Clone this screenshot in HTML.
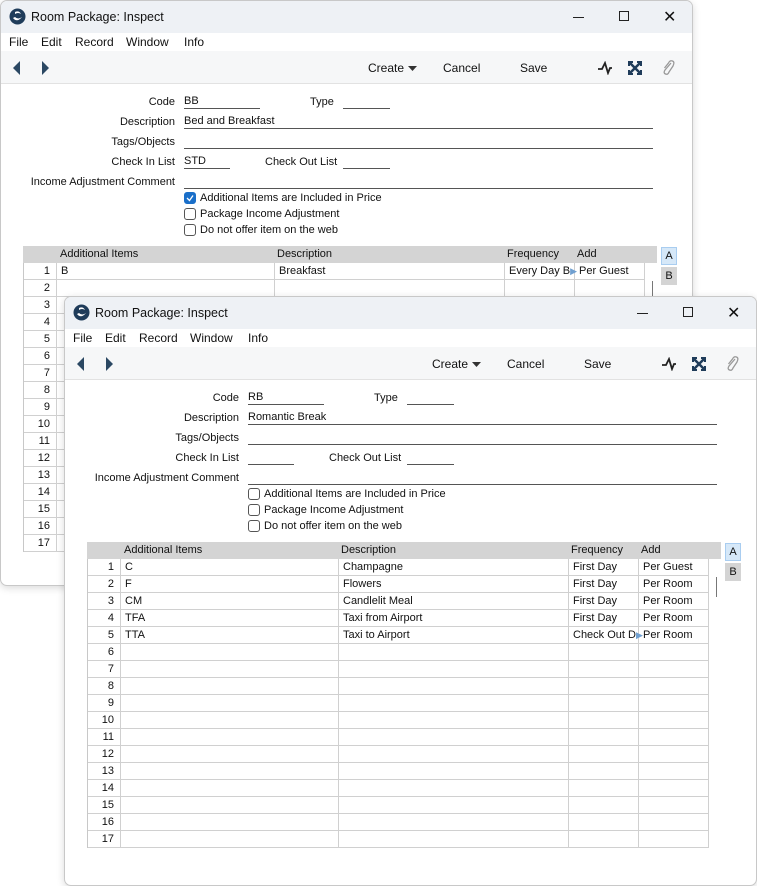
<!DOCTYPE html>
<html><head><meta charset="utf-8"><style>
*{box-sizing:border-box;margin:0;padding:0}
body{width:757px;height:882px;background:#fff;position:relative;overflow:hidden;font-family:"Liberation Sans",sans-serif;font-size:11px;color:#111}
.win{position:absolute;width:693px;background:#fff;border:1px solid #c8c8c8;border-radius:7px;overflow:hidden;box-shadow:0 2px 8px rgba(0,0,0,.15)}
.a{position:absolute;white-space:nowrap}
.title{left:0;top:0;width:100%;height:32px;background:#eef1f5}
.menu{left:0;top:32px;width:100%;height:18px;background:#fff;font-size:12px}
.tb{left:0;top:50px;width:100%;height:33px;background:#f6f7f8;border-bottom:1px solid #e2e2e2;font-size:12px}
.lbl{text-align:right;width:170px;left:4px}
.ln{border-bottom:1px solid #555;height:14px}
.cb{width:12px;height:12px;border:1px solid #555;border-radius:3px;background:#fff}
.grid{left:22px;top:245px;width:637px}
.hd{position:absolute;left:0;top:0;width:634px;height:17px;background:#d4d4d4}
.body{position:absolute;left:0;top:17px;width:621px;border-left:1px solid #c8c8c8;background:repeating-linear-gradient(to bottom,transparent 0,transparent 16px,#d0d0d0 16px,#d0d0d0 17px)}
.vl{position:absolute;top:0;width:1px;background:#d0d0d0}
.rows{position:absolute;top:0;line-height:17px}
</style></head><body>

<!-- Window 1 -->
<div class="win" style="left:0;top:0;height:586px">
 <div class="a title">
  <svg class="a" style="left:8px;top:7px" width="17" height="17" viewBox="0 0 17 17"><circle cx="8.5" cy="8.5" r="8" fill="#1f3c5a"/><path d="M4 10 Q8 15 13 9 Q9 12 6 9 Z" fill="#fff"/><path d="M6 4 Q10 2 12 6 Q9 4 6 6Z" fill="#fff"/></svg>
  <div class="a" style="left:30px;top:9px;font-size:12.5px">Room Package: Inspect</div>
  <div class="a" style="left:572px;top:16px;width:11px;height:1px;background:#222"></div>
  <div class="a" style="left:618px;top:10px;width:10px;height:10px;border:1px solid #222"></div>
  <div class="a" style="left:662px;top:6px;font-size:16px">✕</div>
 </div>
 <div class="a menu"><span class="a" style="left:8px;top:2px">File</span><span class="a" style="left:40px;top:2px">Edit</span><span class="a" style="left:74px;top:2px">Record</span><span class="a" style="left:125px;top:2px">Window</span><span class="a" style="left:183px;top:2px">Info</span></div>
 <div class="a tb">
  <svg class="a" style="left:11px;top:10px" width="40" height="14"><path d="M8 0 L1 7 L8 14Z" fill="#2b4863"/><path d="M30 0 L37 7 L30 14Z" fill="#2b4863"/></svg>
  <span class="a" style="left:367px;top:10px">Create</span><svg class="a" style="left:407px;top:15px" width="9" height="5"><path d="M0 0H9L4.5 5Z" fill="#333"/></svg>
  <span class="a" style="left:442px;top:10px">Cancel</span><span class="a" style="left:519px;top:10px">Save</span>
  <svg class="a" style="left:596px;top:10px" width="16" height="14"><path d="M1 8 L5 8 L8 2 L11 12 L13 7 L15 7" stroke="#222" stroke-width="1.8" fill="none"/></svg>
  <svg class="a" style="left:627px;top:10px" width="14" height="14"><path d="M1 1L13 13M13 1L1 13" stroke="#1f3c5a" stroke-width="2.5"/><path d="M0 0h5v2H2v3H0zM14 0v5h-2V2H9V0zM0 14V9h2v3h3v2zM14 14H9v-2h3V9h2z" fill="#1f3c5a"/></svg>
  <svg class="a" style="left:660px;top:8px" width="14" height="17"><path d="M10 4 L4 11 Q2 14 4.5 15 Q7 16 8 13 L12 7 Q14 3 11.5 2 Q9 1 7.5 4 L3.5 9" stroke="#999" stroke-width="1.3" fill="none"/></svg>
 </div>
 <div class="a lbl" style="top:95px">Code</div><div class="a ln" style="left:183px;top:94px;width:76px">BB</div>
 <div class="a" style="left:309px;top:95px">Type</div><div class="a ln" style="left:342px;top:94px;width:47px"></div>
 <div class="a lbl" style="top:115px">Description</div><div class="a ln" style="left:183px;top:114px;width:469px">Bed and Breakfast</div>
 <div class="a lbl" style="top:135px">Tags/Objects</div><div class="a ln" style="left:183px;top:134px;width:469px"></div>
 <div class="a lbl" style="top:155px">Check In List</div><div class="a ln" style="left:183px;top:154px;width:46px">STD</div>
 <div class="a" style="left:264px;top:155px">Check Out List</div><div class="a ln" style="left:342px;top:154px;width:47px"></div>
 <div class="a lbl" style="top:175px">Income Adjustment Comment</div><div class="a ln" style="left:183px;top:174px;width:469px"></div>
 <div class="a cb" style="left:183px;top:191px;background:#1a6fc9;border-color:#1a6fc9"><svg width="10" height="10" style="position:absolute;left:0;top:0"><path d="M2 5L4.5 7.5L8 2.5" stroke="#fff" stroke-width="1.3" fill="none"/></svg></div><div class="a" style="left:199px;top:191px">Additional Items are Included in Price</div>
 <div class="a cb" style="left:183px;top:207px"></div><div class="a" style="left:199px;top:207px">Package Income Adjustment</div>
 <div class="a cb" style="left:183px;top:223px"></div><div class="a" style="left:199px;top:223px">Do not offer item on the web</div>
 <div class="a grid">
  <div class="hd"><span class="a" style="left:37px;top:2px">Additional Items</span><span class="a" style="left:254px;top:2px">Description</span><span class="a" style="left:484px;top:2px">Frequency</span><span class="a" style="left:554px;top:2px">Add</span></div>
  <div class="body" style="height:289px">
   <div class="vl" style="left:32px;height:289px"></div><div class="vl" style="left:250px;height:289px"></div><div class="vl" style="left:480px;height:289px"></div><div class="vl" style="left:550px;height:289px"></div><div class="vl" style="left:620px;height:289px"></div>
   <div class="rows" style="left:0;width:26px;text-align:right">1<br>2<br>3<br>4<br>5<br>6<br>7<br>8<br>9<br>10<br>11<br>12<br>13<br>14<br>15<br>16<br>17</div>
   <div class="rows" style="left:37px">B</div><div class="rows" style="left:255px">Breakfast</div><div class="rows" style="left:485px">Every Day B<span style="color:#6f9fd0;font-size:9px">▶</span></div><div class="rows" style="left:555px">Per Guest</div>
  </div>
  <div class="a" style="left:629px;top:35px;width:1px;height:20px;background:#777"></div>
 </div>
 <div class="a" style="left:660px;top:246px;width:16px;height:18px;background:#d6e8f8;border:1px solid #a9cdf0;text-align:center;line-height:16px">A</div>
 <div class="a" style="left:660px;top:266px;width:16px;height:18px;background:#d4d4d4;text-align:center;line-height:18px">B</div>
</div>

<!-- Window 2 -->
<div class="win" style="left:64px;top:296px;height:590px">
 <div class="a title">
  <svg class="a" style="left:8px;top:7px" width="17" height="17" viewBox="0 0 17 17"><circle cx="8.5" cy="8.5" r="8" fill="#1f3c5a"/><path d="M4 10 Q8 15 13 9 Q9 12 6 9 Z" fill="#fff"/><path d="M6 4 Q10 2 12 6 Q9 4 6 6Z" fill="#fff"/></svg>
  <div class="a" style="left:30px;top:9px;font-size:12.5px">Room Package: Inspect</div>
  <div class="a" style="left:572px;top:16px;width:11px;height:1px;background:#222"></div>
  <div class="a" style="left:618px;top:10px;width:10px;height:10px;border:1px solid #222"></div>
  <div class="a" style="left:662px;top:6px;font-size:16px">✕</div>
 </div>
 <div class="a menu"><span class="a" style="left:8px;top:2px">File</span><span class="a" style="left:40px;top:2px">Edit</span><span class="a" style="left:74px;top:2px">Record</span><span class="a" style="left:125px;top:2px">Window</span><span class="a" style="left:183px;top:2px">Info</span></div>
 <div class="a tb">
  <svg class="a" style="left:11px;top:10px" width="40" height="14"><path d="M8 0 L1 7 L8 14Z" fill="#2b4863"/><path d="M30 0 L37 7 L30 14Z" fill="#2b4863"/></svg>
  <span class="a" style="left:367px;top:10px">Create</span><svg class="a" style="left:407px;top:15px" width="9" height="5"><path d="M0 0H9L4.5 5Z" fill="#333"/></svg>
  <span class="a" style="left:442px;top:10px">Cancel</span><span class="a" style="left:519px;top:10px">Save</span>
  <svg class="a" style="left:596px;top:10px" width="16" height="14"><path d="M1 8 L5 8 L8 2 L11 12 L13 7 L15 7" stroke="#222" stroke-width="1.8" fill="none"/></svg>
  <svg class="a" style="left:627px;top:10px" width="14" height="14"><path d="M1 1L13 13M13 1L1 13" stroke="#1f3c5a" stroke-width="2.5"/><path d="M0 0h5v2H2v3H0zM14 0v5h-2V2H9V0zM0 14V9h2v3h3v2zM14 14H9v-2h3V9h2z" fill="#1f3c5a"/></svg>
  <svg class="a" style="left:660px;top:8px" width="14" height="17"><path d="M10 4 L4 11 Q2 14 4.5 15 Q7 16 8 13 L12 7 Q14 3 11.5 2 Q9 1 7.5 4 L3.5 9" stroke="#999" stroke-width="1.3" fill="none"/></svg>
 </div>
 <div class="a lbl" style="top:95px">Code</div><div class="a ln" style="left:183px;top:94px;width:76px">RB</div>
 <div class="a" style="left:309px;top:95px">Type</div><div class="a ln" style="left:342px;top:94px;width:47px"></div>
 <div class="a lbl" style="top:115px">Description</div><div class="a ln" style="left:183px;top:114px;width:469px">Romantic Break</div>
 <div class="a lbl" style="top:135px">Tags/Objects</div><div class="a ln" style="left:183px;top:134px;width:469px"></div>
 <div class="a lbl" style="top:155px">Check In List</div><div class="a ln" style="left:183px;top:154px;width:46px"></div>
 <div class="a" style="left:264px;top:155px">Check Out List</div><div class="a ln" style="left:342px;top:154px;width:47px"></div>
 <div class="a lbl" style="top:175px">Income Adjustment Comment</div><div class="a ln" style="left:183px;top:174px;width:469px"></div>
 <div class="a cb" style="left:183px;top:191px"></div><div class="a" style="left:199px;top:191px">Additional Items are Included in Price</div>
 <div class="a cb" style="left:183px;top:207px"></div><div class="a" style="left:199px;top:207px">Package Income Adjustment</div>
 <div class="a cb" style="left:183px;top:223px"></div><div class="a" style="left:199px;top:223px">Do not offer item on the web</div>
 <div class="a grid">
  <div class="hd"><span class="a" style="left:37px;top:2px">Additional Items</span><span class="a" style="left:254px;top:2px">Description</span><span class="a" style="left:484px;top:2px">Frequency</span><span class="a" style="left:554px;top:2px">Add</span></div>
  <div class="body" style="height:289px">
   <div class="vl" style="left:32px;height:289px"></div><div class="vl" style="left:250px;height:289px"></div><div class="vl" style="left:480px;height:289px"></div><div class="vl" style="left:550px;height:289px"></div><div class="vl" style="left:620px;height:289px"></div>
   <div class="rows" style="left:0;width:26px;text-align:right">1<br>2<br>3<br>4<br>5<br>6<br>7<br>8<br>9<br>10<br>11<br>12<br>13<br>14<br>15<br>16<br>17</div>
   <div class="rows" style="left:37px">C<br>F<br>CM<br>TFA<br>TTA</div>
   <div class="rows" style="left:255px">Champagne<br>Flowers<br>Candlelit Meal<br>Taxi from Airport<br>Taxi to Airport</div>
   <div class="rows" style="left:485px">First Day<br>First Day<br>First Day<br>First Day<br>Check Out D<span style="color:#6f9fd0;font-size:9px">▶</span></div>
   <div class="rows" style="left:555px">Per Guest<br>Per Room<br>Per Room<br>Per Room<br>Per Room</div>
  </div>
  <div class="a" style="left:629px;top:35px;width:1px;height:20px;background:#777"></div>
 </div>
 <div class="a" style="left:660px;top:246px;width:16px;height:18px;background:#d6e8f8;border:1px solid #a9cdf0;text-align:center;line-height:16px">A</div>
 <div class="a" style="left:660px;top:266px;width:16px;height:18px;background:#d4d4d4;text-align:center;line-height:18px">B</div>
</div>
</body></html>
